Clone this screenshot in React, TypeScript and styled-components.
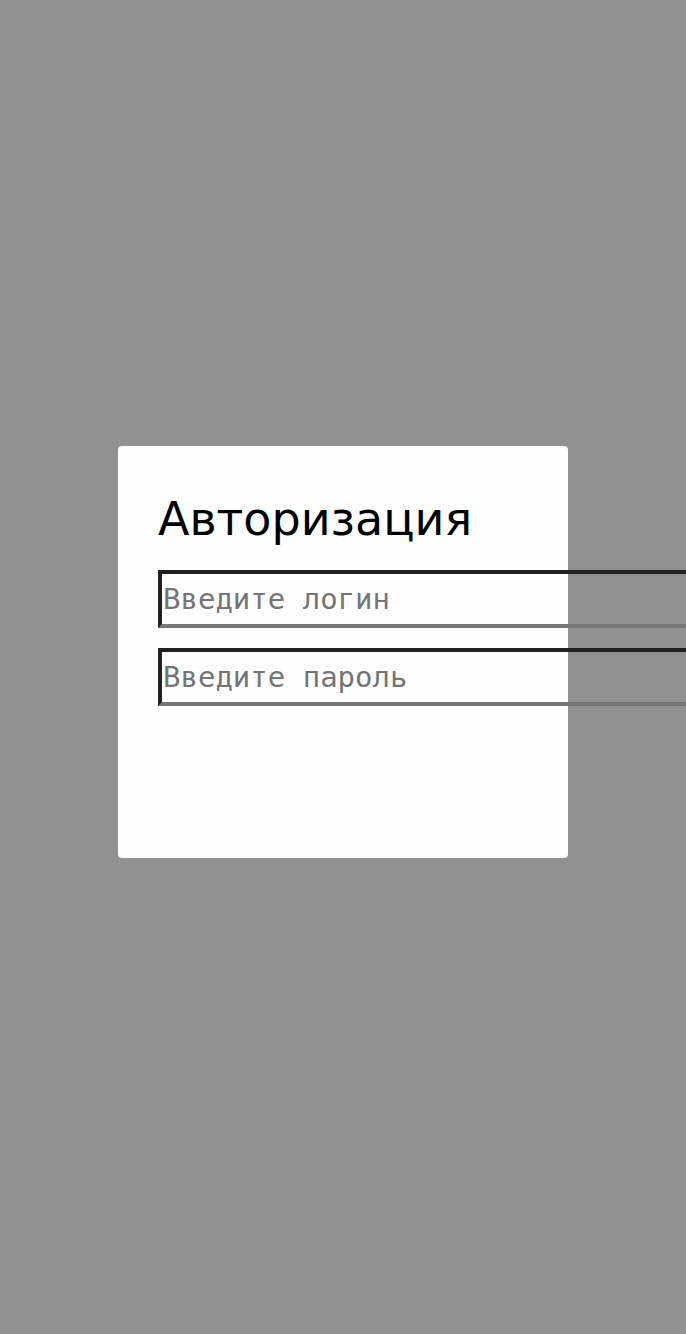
import React from "react";
import styled, { createGlobalStyle } from "styled-components";

const Global = createGlobalStyle`
  html, body {
    margin: 0;
    padding: 0;
    overflow: hidden;
    background: #919191;
  }
  * { box-sizing: border-box; }
`;

const Page = styled.div`
  min-height: 100vh;
  display: flex;
  align-items: center;
  justify-content: center;
  padding-bottom: 30px;
`;

const Card = styled.form`
  width: 450px;
  height: 412px;
  background: #fefefe;
  border-radius: 4px;
  padding: 49px 40px 40px;
  display: flex;
  flex-direction: column;
`;

const Title = styled.h1`
  margin: 0 0 27px;
  font-family: "DejaVu Sans", sans-serif;
  font-weight: 400;
  font-size: 46px;
  line-height: 48px;
  color: #000;
`;

const Field = styled.input`
  flex: none;
  width: 600px;
  height: 58px;
  margin: 0 0 20px;
  padding: 0 1px;
  border: 4px inset #767676;
  background: transparent;
  font-family: "DejaVu Sans Mono", monospace;
  font-size: 29px;
  color: #000;
  outline: none;
  &::placeholder {
    color: #757575;
  }
`;

export default function App() {
  return (
    <>
      <Global />
      <Page>
        <Card onSubmit={(e) => e.preventDefault()}>
          <Title>Авторизация</Title>
          <Field type="text" placeholder="Введите логин" />
          <Field type="password" placeholder="Введите пароль" />
        </Card>
      </Page>
    </>
  );
}
